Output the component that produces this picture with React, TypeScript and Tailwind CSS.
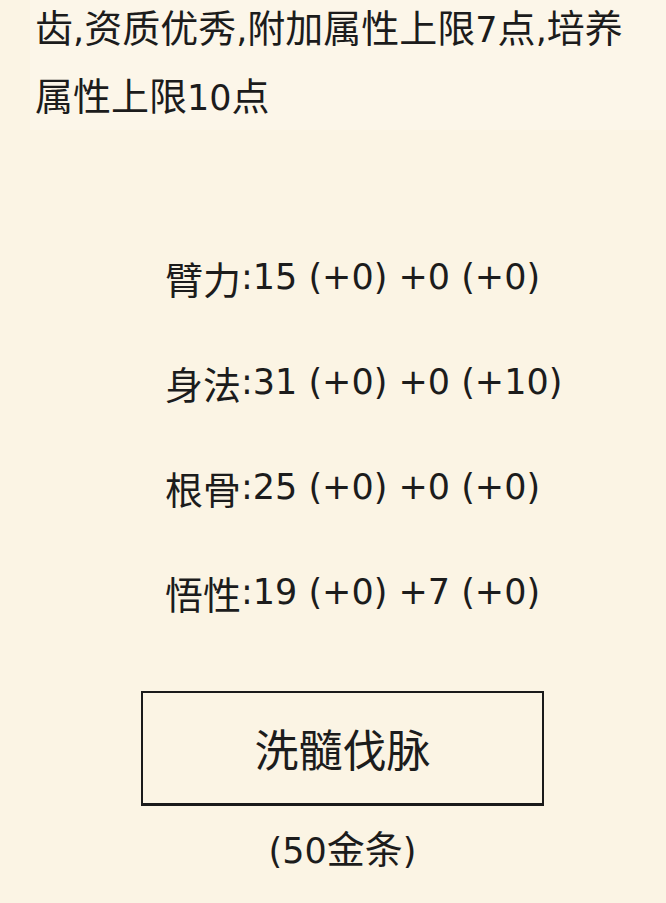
import React from "react";

// Latin runs use a wider face a little smaller than the CJK text
const latin = "font-['DejaVu_Sans'] text-[35px]";

function Mixed({ text }: { text: string }) {
  const parts = text.split(/([\u4e00-\u9fff]+)/).filter(Boolean);
  return (
    <>
      {parts.map((p, i) =>
        /[\u4e00-\u9fff]/.test(p) ? (
          <span key={i}>{p}</span>
        ) : (
          <span key={i} className={latin}>
            {p}
          </span>
        )
      )}
    </>
  );
}

const stats = [
  "臂力:15 (+0) +0 (+0)",
  "身法:31 (+0) +0 (+10)",
  "根骨:25 (+0) +0 (+0)",
  "悟性:19 (+0) +7 (+0)",
];

export default function App() {
  return (
    <div className="min-h-[903px] bg-[#fbf4e4] text-[#1c1c1c] font-['Noto_Sans_CJK_SC',sans-serif] text-[38px] overflow-hidden">
      <div className="-mt-[6px] ml-[30px] pl-[5px] pr-[20px] leading-[64px] bg-[#fcf6e9]">
        <Mixed text="齿,资质优秀,附加属性上限7点,培养属性上限10点" />
      </div>

      <div className="mt-[95px] ml-[160px] flex flex-col">
        {stats.map((s) => (
          <div key={s} className="h-[105px] flex items-center pl-[5px] whitespace-nowrap">
            <Mixed text={s} />
          </div>
        ))}
      </div>

      <div className="mt-[46px] ml-[141px] w-[403px] flex flex-col items-center">
        <button className="w-full h-[115px] border-2 border-b-[3px] border-[#1a1a1a] text-[44px] leading-none bg-transparent">
          洗髓伐脉
        </button>
        <div className="mt-[16px] leading-[50px] whitespace-nowrap">
          <Mixed text="(50金条)" />
        </div>
      </div>
    </div>
  );
}
